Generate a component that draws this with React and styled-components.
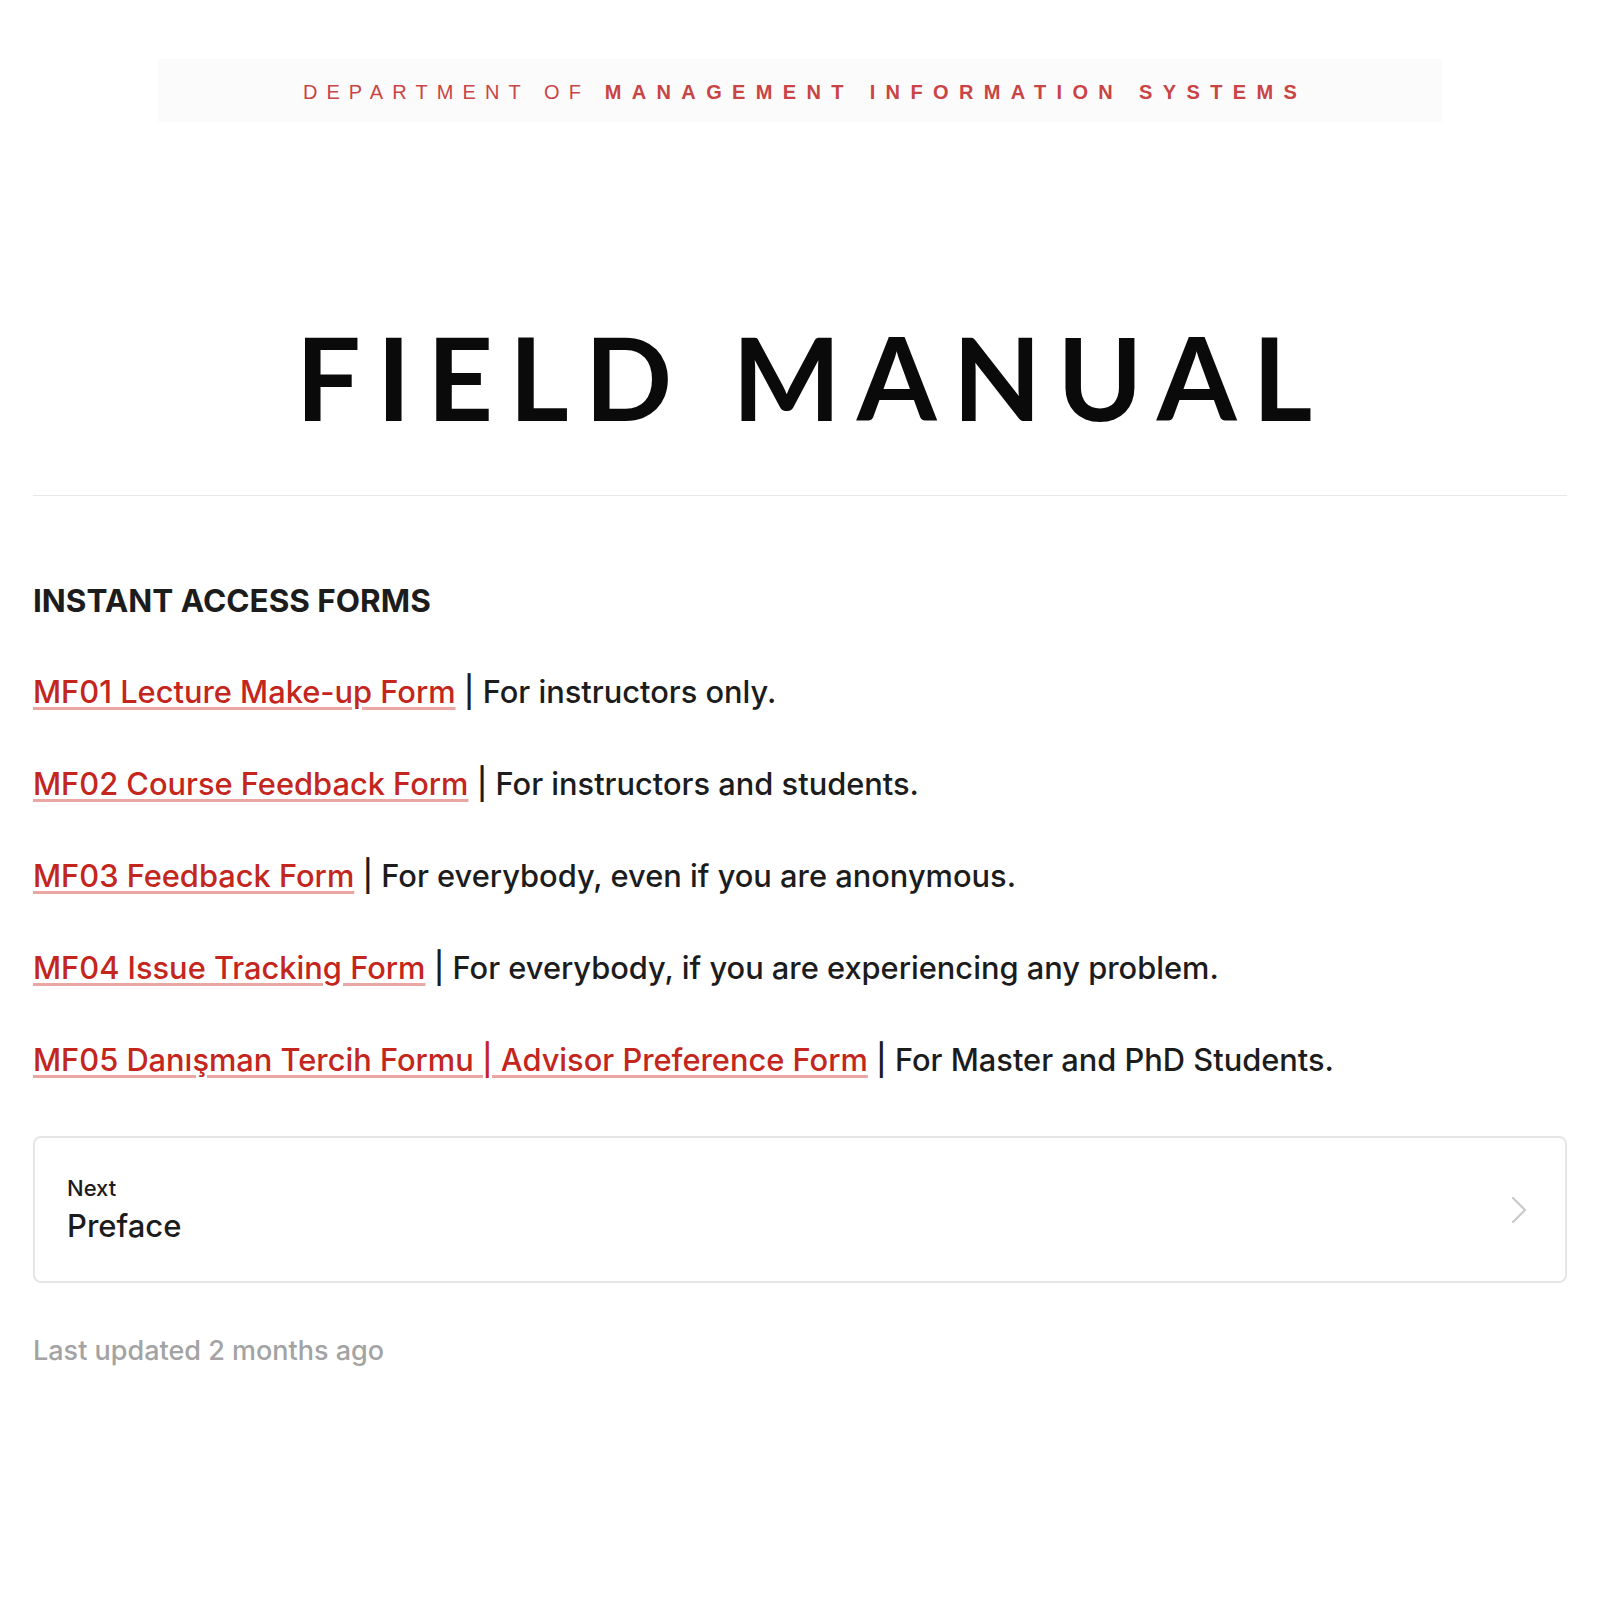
import React from "react";
import styled, { createGlobalStyle } from "styled-components";

const Global = createGlobalStyle`
  html, body { margin: 0; padding: 0; background: #ffffff; }
  body { font-family: Inter, "Noto Sans", "Liberation Sans", sans-serif; color: #1c1c1c; }
`;

const Page = styled.main`
  padding: 59px 33px 200px;
`;

const Banner = styled.div`
  width: 1284px;
  height: 63px;
  margin: 0 auto;
  background: #fbfbfb;
  display: flex;
  align-items: center;
  justify-content: center;
  padding: 4px 0 0 10px;
  box-sizing: border-box;
`;

const BannerText = styled.span`
  font-family: "Liberation Sans", Lato, sans-serif;
  font-size: 20px;
  color: #c94444;
  letter-spacing: ${(p) => (p.$bold ? "10.35px" : "9.1px")};
  font-weight: ${(p) => (p.$bold ? 700 : 400)};
  white-space: pre;
`;

const Title = styled.h1`
  margin: 194px 0 0;
  text-align: center;
  font-family: Lato, "Liberation Sans", sans-serif;
  font-weight: 700;
  font-size: 115px;
  line-height: 120px;
  letter-spacing: 16px;
  color: #0a0a0a;
  padding-left: 24px;
`;

const Rule = styled.hr`
  margin: 59px 0 0;
  border: 0;
  height: 1px;
  background: #e8e8e8;
`;

const Heading = styled.h3`
  margin: 85px 0 0;
  font-size: 31.5px;
  line-height: 40px;
  font-weight: 700;
  color: #1c1c1c;
`;

const FormList = styled.div`
  display: flex;
  flex-direction: column;
  gap: 50px;
  margin-top: 50px;
`;

const Line = styled.p`
  margin: 0;
  font-size: 30.8px;
  line-height: 42px;
  font-weight: 500;
  color: #1c1c1c;
`;

const Link = styled.a`
  color: #c4261d;
  text-decoration: underline;
  text-decoration-color: #eaa6a2;
  text-decoration-thickness: 3px;
  text-underline-offset: 4px;
`;

const Card = styled.a`
  margin-top: 55px;
  display: flex;
  align-items: center;
  justify-content: space-between;
  height: 147px;
  box-sizing: border-box;
  padding: 0 37px 0 32px;
  border: 2px solid #e6e6e6;
  border-radius: 8px;
  text-decoration: none;
  color: #1c1c1c;
`;

const CardText = styled.div`
  display: flex;
  flex-direction: column;
  gap: 4px;
`;

const CardLabel = styled.span`
  font-size: 22px;
  line-height: 28px;
  font-weight: 500;
`;

const CardTitle = styled.span`
  font-size: 31px;
  line-height: 40px;
  font-weight: 500;
`;

const Updated = styled.p`
  margin: 50px 0 0;
  font-size: 27px;
  line-height: 36px;
  font-weight: 500;
  color: #a3a3a3;
`;

const forms = [
  ["MF01 Lecture Make-up Form", "For instructors only."],
  ["MF02 Course Feedback Form", "For instructors and students."],
  ["MF03 Feedback Form", "For everybody, even if you are anonymous."],
  ["MF04 Issue Tracking Form", "For everybody, if you are experiencing any problem."],
  ["MF05 Danışman Tercih Formu | Advisor Preference Form", "For Master and PhD Students."],
];

export default function App() {
  return (
    <>
      <Global />
      <Page>
        <Banner>
          <BannerText>DEPARTMENT OF </BannerText>
          <BannerText $bold>MANAGEMENT INFORMATION SYSTEMS</BannerText>
        </Banner>
        <Title>FIELD MANUAL</Title>
        <Rule />
        <Heading>INSTANT ACCESS FORMS</Heading>
        <FormList>
          {forms.map(([name, desc]) => (
            <Line key={name}>
              <Link href="#">{name}</Link> | {desc}
            </Line>
          ))}
        </FormList>
        <Card href="#">
          <CardText>
            <CardLabel>Next</CardLabel>
            <CardTitle>Preface</CardTitle>
          </CardText>
          <svg width="18" height="28" viewBox="0 0 18 28" fill="none">
            <path d="M3 2 L15 14 L3 26" stroke="#c9c9c9" strokeWidth="2.2" strokeLinecap="round" strokeLinejoin="round" />
          </svg>
        </Card>
        <Updated>Last updated 2 months ago</Updated>
      </Page>
    </>
  );
}
